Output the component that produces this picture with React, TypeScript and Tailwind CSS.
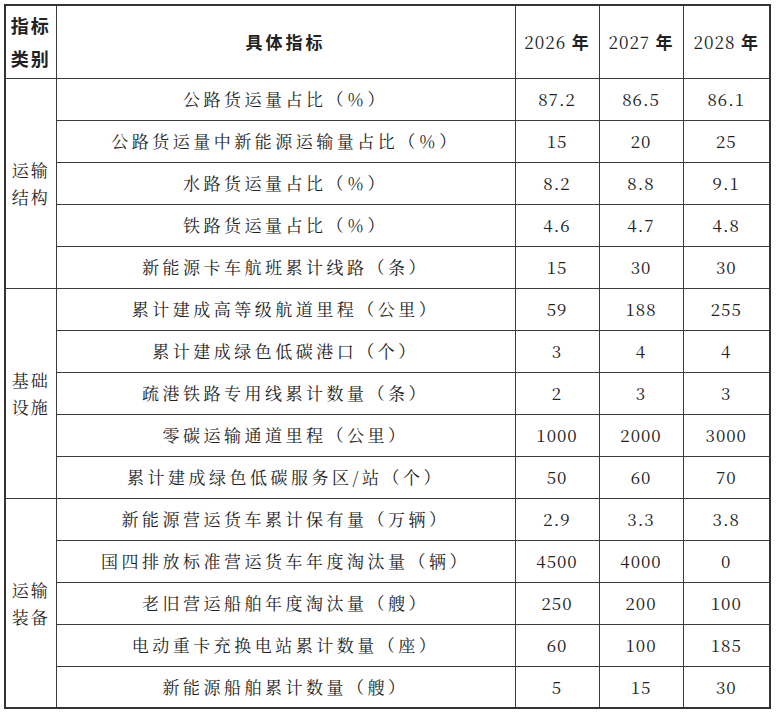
const serif = { fontFamily: '"Noto Serif CJK SC", "Liberation Serif", "Noto Sans CJK SC", serif' };

type Row = { name: string; v: [string, string, string] };
type Group = { label: [string, string]; rows: Row[] };

const groups: Group[] = [
  {
    label: ['运输', '结构'],
    rows: [
      { name: '公路货运量占比（％）', v: ['87.2', '86.5', '86.1'] },
      { name: '公路货运量中新能源运输量占比（％）', v: ['15', '20', '25'] },
      { name: '水路货运量占比（％）', v: ['8.2', '8.8', '9.1'] },
      { name: '铁路货运量占比（％）', v: ['4.6', '4.7', '4.8'] },
      { name: '新能源卡车航班累计线路（条）', v: ['15', '30', '30'] },
    ],
  },
  {
    label: ['基础', '设施'],
    rows: [
      { name: '累计建成高等级航道里程（公里）', v: ['59', '188', '255'] },
      { name: '累计建成绿色低碳港口（个）', v: ['3', '4', '4'] },
      { name: '疏港铁路专用线累计数量（条）', v: ['2', '3', '3'] },
      { name: '零碳运输通道里程（公里）', v: ['1000', '2000', '3000'] },
      { name: '累计建成绿色低碳服务区/站（个）', v: ['50', '60', '70'] },
    ],
  },
  {
    label: ['运输', '装备'],
    rows: [
      { name: '新能源营运货车累计保有量（万辆）', v: ['2.9', '3.3', '3.8'] },
      { name: '国四排放标准营运货车年度淘汰量（辆）', v: ['4500', '4000', '0'] },
      { name: '老旧营运船舶年度淘汰量（艘）', v: ['250', '200', '100'] },
      { name: '电动重卡充换电站累计数量（座）', v: ['60', '100', '185'] },
      { name: '新能源船舶累计数量（艘）', v: ['5', '15', '30'] },
    ],
  },
];

const cell = 'border border-[#3a3a3a] text-center align-middle p-0';

export default function App() {
  return (
    <div className="bg-white w-[776px] h-[713px] pt-[4px] pl-[4px]" style={serif}>
      <table className="border-collapse border-2 border-[#333] text-[#222] table-fixed w-[765px]">
        <colgroup>
          <col className="w-[51px]" />
          <col className="w-[459px]" />
          <col className="w-[84px]" />
          <col className="w-[84px]" />
          <col className="w-[87px]" />
        </colgroup>
        <thead>
          <tr className="h-[73px]">
            <th className={`${cell} text-[18px] font-bold leading-[33px] tracking-[2px]`} style={{ fontFamily: '"Noto Sans CJK SC", sans-serif' }}>
              指标<br />类别
            </th>
            <th className={`${cell} text-[17px] font-bold tracking-[3px]`} style={{ fontFamily: '"Noto Sans CJK SC", sans-serif' }}>
              具体指标
            </th>
            {['2026', '2027', '2028'].map((y) => (
              <th key={y} className={`${cell} text-[17px] font-normal tracking-[1px]`}>
                {y} <span className="font-bold" style={{ fontFamily: '"Noto Sans CJK SC", sans-serif' }}>年</span>
              </th>
            ))}
          </tr>
        </thead>
        <tbody>
          {groups.map((g) =>
            g.rows.map((r, i) => (
              <tr key={r.name} className="h-[42px]">
                {i === 0 && (
                  <td rowSpan={g.rows.length} className={`${cell} text-[17px] leading-[27px] tracking-[2px]`}>
                    {g.label[0]}
                    <br />
                    {g.label[1]}
                  </td>
                )}
                <td className={`${cell} text-[17px] tracking-[3.5px]`}>{r.name}</td>
                {r.v.map((v, j) => (
                  <td key={j} className={`${cell} text-[17px] tracking-[1px]`}>
                    {v}
                  </td>
                ))}
              </tr>
            ))
          )}
        </tbody>
      </table>
    </div>
  );
}
